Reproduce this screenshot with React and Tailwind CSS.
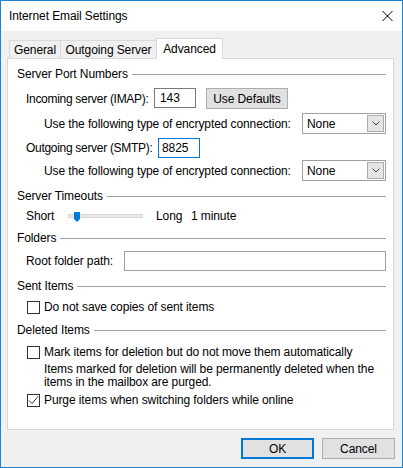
import React from 'react';

const Heading = ({ children, mt }) => (
  <div className={`flex items-center h-[16px] ${mt}`}>
    <span className="whitespace-nowrap">{children}</span>
    <div className="flex-1 h-px bg-[#a0a0a0] ml-[4px]" />
  </div>
);

const Select = () => (
  <div className="w-[84px] h-[21px] shrink-0 border border-[#a0a0a0] bg-white flex items-center justify-between pl-[4px] pr-[1px]">
    <span>None</span>
    <div className="w-[17px] h-[17px] bg-[#e5e5e5] border border-[#acacac] flex items-center justify-center">
      <svg width="8" height="5" viewBox="0 0 8 5">
        <path d="M0.5 0.5 L4 4 L7.5 0.5" fill="none" stroke="#444" strokeWidth="1" />
      </svg>
    </div>
  </div>
);

const Checkbox = ({ checked }) => (
  <div className="w-[13px] h-[13px] border border-[#333] bg-white flex items-center justify-center shrink-0">
    {checked && (
      <svg width="11" height="11" viewBox="0 0 11 11">
        <path d="M1 5.5 L4 8.5 L10 1.5" fill="none" stroke="#333" strokeWidth="1" />
      </svg>
    )}
  </div>
);

export default function App() {
  return (
    <div className="w-[403px] h-[468px] border border-[#1883d7] bg-[#f0f0f0] flex flex-col text-[12px] tracking-[-0.1px] leading-none text-black font-['Liberation_Sans',Arial,sans-serif] whitespace-nowrap">
      {/* title bar */}
      <div className="h-[30px] bg-white flex items-center justify-between pl-[8px] pr-[9px] shrink-0">
        <span>Internet Email Settings</span>
        <svg width="11" height="10" viewBox="0 0 11 10">
          <path d="M0.5 0 L10.5 10 M10.5 0 L0.5 10" stroke="#000" strokeWidth="1" />
        </svg>
      </div>

      <div className="flex flex-col pl-[6px] pt-[7px]">
        {/* tabs */}
        <div className="relative z-10 flex items-end h-[20px] ml-[2px]">
          <div className="w-[52px] h-[18px] border border-b-0 border-[#d9d9d9] flex items-center justify-center">General</div>
          <div className="w-[96px] h-[18px] border border-l-0 border-b-0 border-[#d9d9d9] flex items-center justify-center">Outgoing Server</div>
          <div className="w-[67px] h-[21px] -mb-[1px] -ml-[1px] bg-white border border-b-0 border-[#d9d9d9] flex items-center justify-center pb-[1px]">Advanced</div>
        </div>

        {/* panel */}
        <div className="w-[387px] h-[372px] bg-white border border-[#d9d9d9] pl-[9px] pr-[7px] flex flex-col">
          <Heading mt="mt-[7px]">Server Port Numbers</Heading>

          <div className="mt-[6px] h-[21px] flex items-start pl-[9px]">
            <span className="w-[128px] shrink-0 self-center tracking-[-0.3px]">Incoming server (IMAP):</span>
            <div className="w-[42px] h-[20px] border border-[#7a7a7a] flex items-center pl-[5px]">143</div>
            <div className="ml-[10px] w-[82px] h-[21px] bg-[#e1e1e1] border border-[#adadad] flex items-center justify-center">Use Defaults</div>
          </div>

          <div className="mt-[4px] h-[21px] flex items-center justify-between pl-[27px]">
            <span>Use the following type of encrypted connection:</span>
            <Select />
          </div>

          <div className="mt-[4px] h-[20px] flex items-center pl-[9px]">
            <span className="w-[132px] shrink-0 tracking-[-0.3px]">Outgoing server (SMTP):</span>
            <div className="w-[42px] h-[20px] border border-[#0078d7] flex items-center pl-[3px]">8825</div>
          </div>

          <div className="mt-[2px] h-[21px] flex items-center justify-between pl-[27px]">
            <span>Use the following type of encrypted connection:</span>
            <Select />
          </div>

          <Heading mt="mt-[7px]">Server Timeouts</Heading>

          <div className="mt-[4px] h-[16px] flex items-center pl-[9px]">
            <span className="w-[42px] shrink-0">Short</span>
            <div className="relative w-[75px] h-[4px] bg-[#e7eaea] border border-[#d6d6d6]">
              <svg className="absolute left-[5px] -top-[3px]" width="6" height="10" viewBox="0 0 6 10">
                <path d="M0 0 H6 V7 L3 10 L0 7 Z" fill="#007ad9" />
              </svg>
            </div>
            <span className="ml-[13px] w-[35px]">Long</span>
            <span>1 minute</span>
          </div>

          <Heading mt="mt-[6px]">Folders</Heading>

          <div className="mt-[5px] h-[20px] flex items-center pl-[9px]">
            <span className="w-[98px] shrink-0">Root folder path:</span>
            <div className="flex-1 h-[20px] border border-[#a0a0a0]" />
          </div>

          <Heading mt="mt-[7px]">Sent Items</Heading>

          <div className="mt-[5px] h-[16px] flex items-center gap-[4px] pl-[10px]">
            <Checkbox />
            <span>Do not save copies of sent items</span>
          </div>

          <Heading mt="mt-[7px]">Deleted Items</Heading>

          <div className="mt-[6px] h-[16px] flex items-center gap-[4px] pl-[10px]">
            <Checkbox />
            <span>Mark items for deletion but do not move them automatically</span>
          </div>

          <div className="mt-[3px] pl-[27px] leading-[13px]">
            Items marked for deletion will be permanently deleted when the
            <br />
            items in the mailbox are purged.
          </div>

          <div className="mt-[3px] h-[16px] flex items-center gap-[4px] pl-[10px]">
            <Checkbox checked />
            <span>Purge items when switching folders while online</span>
          </div>
        </div>

        {/* buttons */}
        <div className="mt-[8px] flex justify-end gap-[8px] pr-[7px]">
          <div className="w-[73px] h-[21px] bg-[#e1e1e1] border-2 border-[#0078d7] flex items-center justify-center">OK</div>
          <div className="w-[73px] h-[21px] bg-[#e1e1e1] border border-[#adadad] flex items-center justify-center">Cancel</div>
        </div>
      </div>
    </div>
  );
}
